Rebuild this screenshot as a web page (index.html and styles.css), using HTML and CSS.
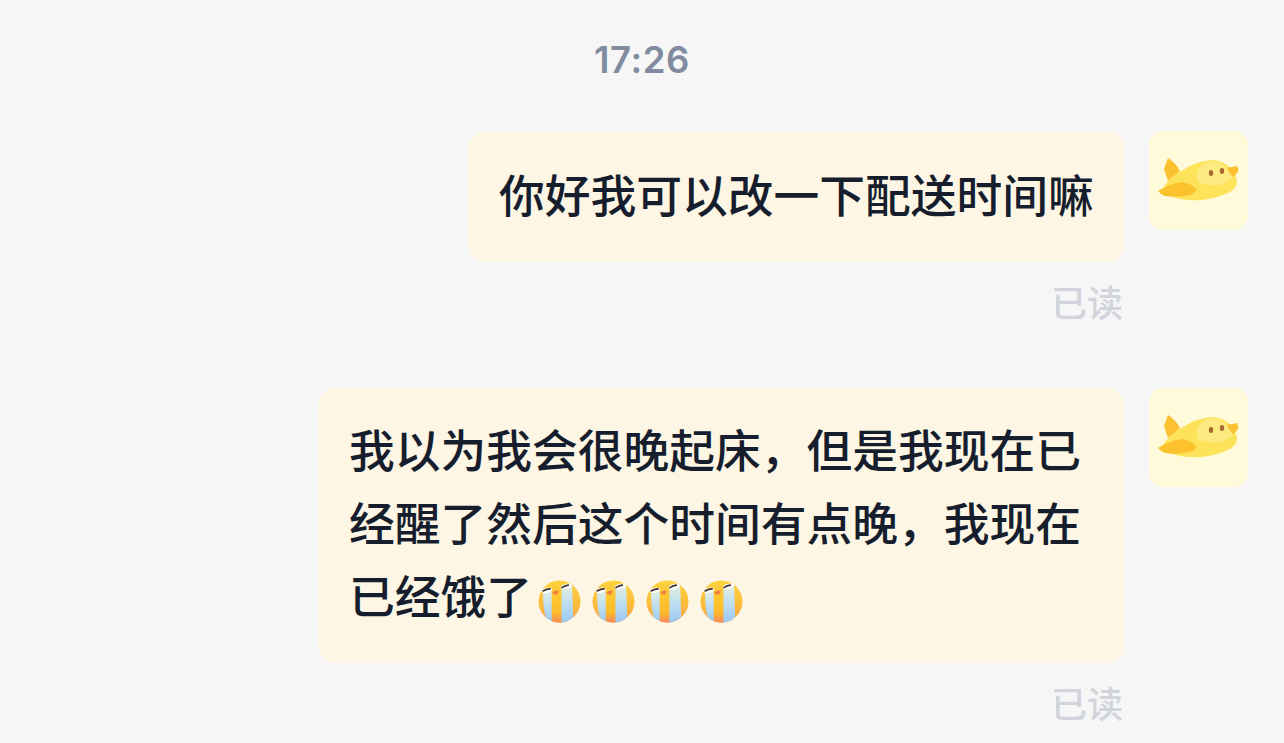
FILE: index.html
```html
<!DOCTYPE html>
<html lang="zh-CN">
<head>
<meta charset="utf-8">
<title>聊天</title>
<link rel="stylesheet" href="styles.css">
</head>
<body>
<svg class="defs" width="0" height="0" aria-hidden="true">
  <defs>
    <linearGradient id="face" x1="0" y1="0" x2="0" y2="1">
      <stop offset="0" stop-color="#fdd23c"/><stop offset=".6" stop-color="#fcbb3c"/><stop offset="1" stop-color="#f99f52"/>
    </linearGradient>
    <linearGradient id="tear" x1="0" y1="0" x2="0" y2="1">
      <stop offset="0" stop-color="#e2eee0"/><stop offset=".45" stop-color="#bfdff0"/><stop offset="1" stop-color="#98c8f0"/>
    </linearGradient>
    <linearGradient id="mid" x1="0" y1="0" x2="0" y2="1">
      <stop offset="0" stop-color="#fdc92f"/><stop offset=".65" stop-color="#fcbb2c"/><stop offset="1" stop-color="#f5875c"/>
    </linearGradient>
    <clipPath id="faceclip"><circle cx="22" cy="22" r="21.500"/></clipPath>
  </defs>
  <symbol id="cry" viewBox="0 0 44 44">
    <circle cx="22" cy="22" r="21.500" fill="url(#face)"/>
    <g clip-path="url(#faceclip)">
      <path d="M14 15 L24.500 13 L24.500 44 L14 44Z" fill="url(#mid)"/>
      <path d="M5 11 L14 11 L14 44 L11 44 Q5 36 5 11Z" fill="url(#tear)"/>
      <path d="M24 9 L35 6 L36 39 L30 44 L24 44Z" fill="url(#tear)"/>
    </g>
    <ellipse cx="9" cy="10.500" rx="5.500" ry="2.600" fill="#fff" transform="rotate(-10 9 10.500)"/>
    <ellipse cx="29" cy="6.500" rx="6" ry="2.700" fill="#fff" transform="rotate(-14 29 6.500)"/>
    <path d="M5.200 11.200 Q9 9 12.500 9" fill="none" stroke="#3e3129" stroke-width="1.700" stroke-linecap="round"/>
    <path d="M24.500 7.800 Q28 5.400 31 5.200" fill="none" stroke="#3e3129" stroke-width="1.700" stroke-linecap="round"/>
    <path d="M14.500 12.800 Q18 10 21 10.800 Q21.500 14.500 18 15 Q15.500 15.200 14.500 12.800Z" fill="#f0843c"/>
  </symbol>
  <symbol id="plane" viewBox="0 0 99 99">
    <rect width="99" height="99" rx="14" fill="#fffad9"/>
    <path d="M15 38 L19 27 Q26 31 31 40 L19 50Z" fill="#fcc130"/>
    <path d="M12 60 Q22 44 34 39 Q46 31 61 29 Q74 29 81 37 Q88 45 88 51 Q87 58 81 61 Q66 68 51 69 Q36 70 24 66 Q16 64 12 60Z" fill="#fde35a"/>
    <path d="M48 42 Q50 35 58 31 Q68 29 76 35 Q82 41 84 47 Q78 52 71 54 Q60 55 50 52 Q47 48 48 42Z" fill="#fdea80"/>
    <path d="M9 60 Q20 53 33 51 Q42 52 48 59 Q46 62 41 64 Q28 67 16 65 Q11 63 9 60Z" fill="#fcc22e"/>
    <path d="M78 37 Q83 36 88 35 Q90 38 89 41 Q87 44 84 46 Q80 42 78 37Z" fill="#fcc130"/>
    <ellipse cx="62" cy="42" rx="2.200" ry="3" fill="#a8692f"/>
    <ellipse cx="73" cy="40" rx="2.200" ry="3" fill="#a8692f"/>
  </symbol>
</svg>

<main class="chat">
  <div class="time">17:26</div>

  <section class="message message-first">
    <div class="bubble">你好我可以改一下配送时间嘛</div>
    <svg class="avatar"><use href="#plane"/></svg>
  </section>
  <div class="read">已读</div>

  <section class="message message-second">
    <div class="bubble bubble-wide">我以为我会很晚起床，但是我现在已经醒了然后这个时间有点晚，我现在已经饿了<span class="emojis"><svg class="emoji"><use href="#cry"/></svg><svg class="emoji"><use href="#cry"/></svg><svg class="emoji"><use href="#cry"/></svg><svg class="emoji"><use href="#cry"/></svg></span></div>
    <svg class="avatar"><use href="#plane"/></svg>
  </section>
  <div class="read">已读</div>
</main>
</body>
</html>
```

FILE: styles.css
```css
* { box-sizing: border-box; }
html, body { margin: 0; padding: 0; }
body {
  width: 1284px;
  height: 743px;
  overflow: hidden;
  background: #f6f6f7;
  font-family: "Noto Sans CJK SC", "Noto Sans", sans-serif;
}
.defs { display: block; height: 0; }
.chat {
  display: flex;
  flex-direction: column;
  padding: 38px 36px 0 0;
}
.time {
  align-self: center;
  margin-right: -36px;
  height: 44px;
  line-height: 44px;
  font-family: Inter, "Noto Sans", sans-serif;
  font-size: 36.500px;
  font-weight: 600;
  letter-spacing: 0.600px;
  color: #808b9f;
}
.message {
  display: flex;
  justify-content: flex-end;
  align-items: flex-start;
  gap: 24px;
}
.message-first { margin-top: 49px; }
.message-second { margin-top: 63px; }
.bubble {
  background: #fdf6e5;
  border-radius: 18px;
  padding: 26px 30px 32px 31px;
  font-size: 45.750px;
  font-weight: 500;
  line-height: 73px;
  color: #161e2e;
  width: 657px;
  white-space: nowrap;
}
.bubble-wide {
  width: 807px;
  white-space: normal;
  padding: 24px 31px 32px 31px;
}
.avatar {
  flex: none;
  width: 99px;
  height: 99px;
}
.emojis {
  display: inline-flex;
  gap: 11px;
  vertical-align: -9px;
  margin-left: 6px;
}
.emoji {
  width: 43px;
  height: 43px;
  display: block;
}
.read {
  align-self: flex-end;
  margin-right: 125px;
  margin-top: 15px;
  height: 48px;
  line-height: 48px;
  font-size: 36px;
  font-weight: 500;
  color: #d1d4da;
}
```
